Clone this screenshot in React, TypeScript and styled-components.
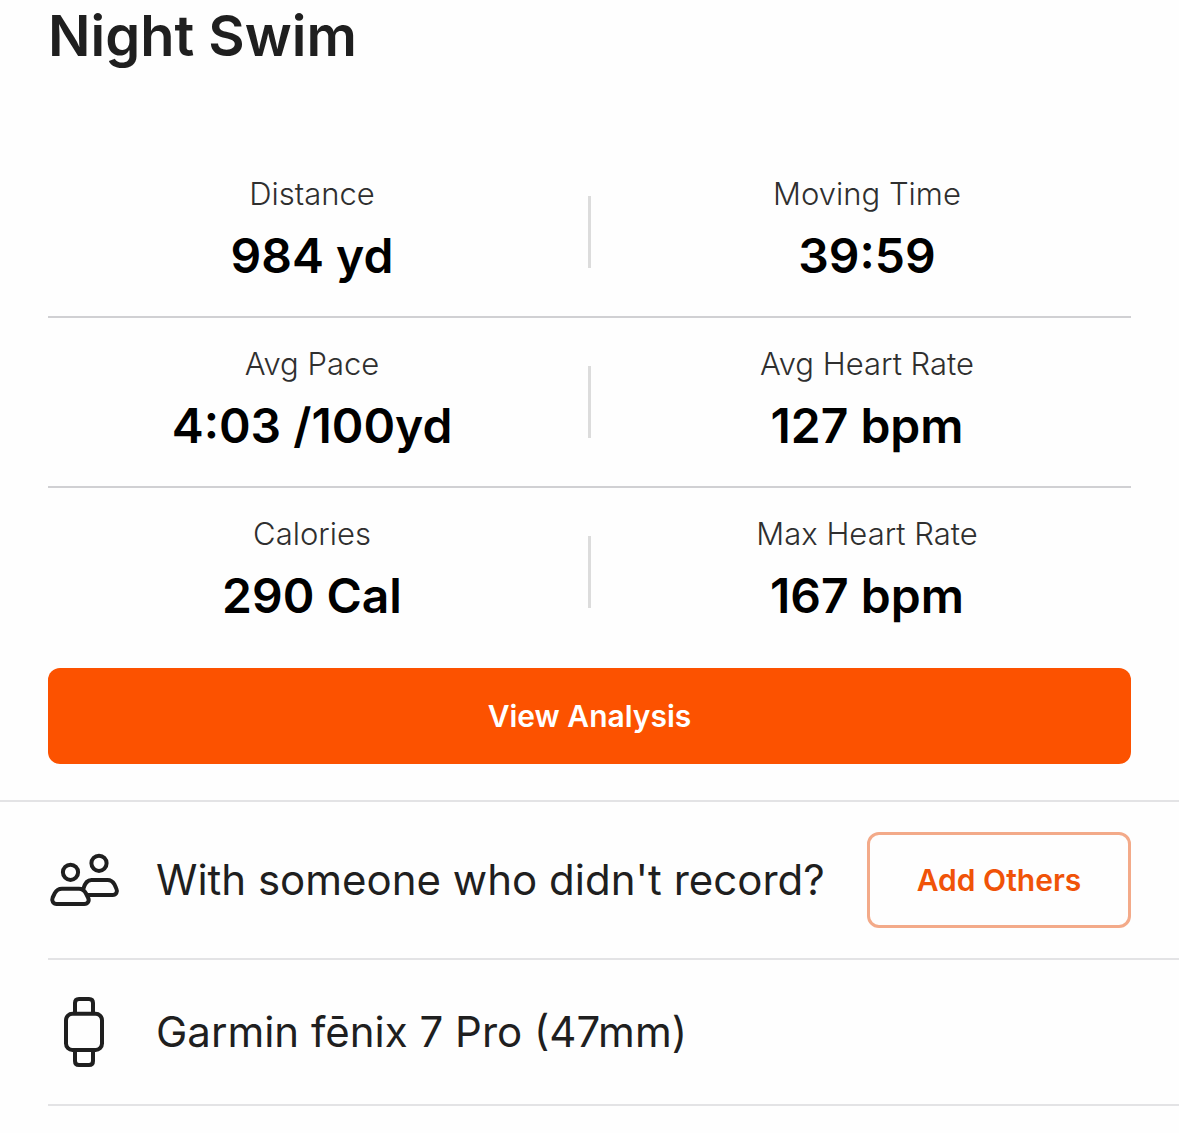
import React from "react";
import styled, { createGlobalStyle } from "styled-components";

const Global = createGlobalStyle`
  *, *::before, *::after { box-sizing: border-box; }
  body { margin: 0; background: #fefefe; color: #1f1f1f; font-family: Inter, "Liberation Sans", sans-serif; }
`;

const Page = styled.main`
  display: flex;
  flex-direction: column;
`;

const Title = styled.h1`
  margin: 0;
  padding: 0 48px;
  font-size: 56px;
  line-height: 72px;
  font-weight: 600;
`;

const Stats = styled.dl`
  margin: 74px 48px 0;
`;

const StatRow = styled.div`
  display: grid;
  grid-template-columns: 1fr 3px 1fr;
  column-gap: 12px;
  align-items: center;
  height: 170px;
  border-top: 2px solid transparent;
  & + & { border-top-color: #d0d0d3; }
`;

const Stat = styled.div`
  display: flex;
  flex-direction: column;
  align-items: center;
  gap: 8px;
`;

const Divider = styled.span`
  height: 72px;
  background: #dcdcdc;
`;

const Label = styled.dt`
  font-size: 31px;
  line-height: 40px;
  font-weight: 300;
  color: #2f2f2f;
`;

const Value = styled.dd`
  margin: 0;
  font-size: 48px;
  line-height: 68px;
  font-weight: 600;
  color: #000;
`;

const Button = styled.button`
  height: 96px;
  border: 0;
  border-radius: 12px;
  font: 600 30px/40px Inter, "Liberation Sans", sans-serif;
`;

const PrimaryButton = styled(Button)`
  margin: 12px 48px 36px;
  background: #fc5200;
  color: #fff;
`;

const OutlineButton = styled(Button)`
  flex: none;
  min-width: 264px;
  border: 3px solid #f3aa89;
  background: #fefefe;
  color: #f05308;
`;

const Details = styled.section`
  border-top: 2px solid #e3e3e5;
  padding-left: 48px;
`;

const DetailRow = styled.div<{ $height: number }>`
  display: flex;
  align-items: center;
  gap: 36px;
  height: ${(p) => p.$height}px;
  padding-right: 48px;
  border-bottom: 2px solid #e3e3e5;
`;

const Icon = styled.svg`
  flex: none;
  width: 72px;
  height: 72px;
  fill: none;
  stroke: #1f1f1f;
  stroke-width: 4;
  stroke-linejoin: round;
`;

const DetailText = styled.span`
  flex: 1;
  font-size: 42px;
  line-height: 56px;
  white-space: nowrap;
`;

const rows = [
  [["Distance", "984 yd"], ["Moving Time", "39:59"]],
  [["Avg Pace", "4:03 /100yd"], ["Avg Heart Rate", "127 bpm"]],
  [["Calories", "290 Cal"], ["Max Heart Rate", "167 bpm"]],
];

export default function App() {
  return (
    <>
      <Global />
      <Page>
        <Title>Night Swim</Title>
        <Stats>
          {rows.map(([left, right]) => (
            <StatRow key={left[0]}>
              <Stat><Label>{left[0]}</Label><Value>{left[1]}</Value></Stat>
              <Divider />
              <Stat><Label>{right[0]}</Label><Value>{right[1]}</Value></Stat>
            </StatRow>
          ))}
        </Stats>
        <PrimaryButton type="button">View Analysis</PrimaryButton>
        <Details>
          <DetailRow $height={158}>
            <Icon viewBox="0 0 72 72" aria-hidden="true">
              <circle cx="22.5" cy="28.3" r="7.6" />
              <circle cx="51" cy="19.3" r="7.6" />
              <path d="M14 44.7H31C34.5 44.7 36.3 46.3 38 49.5L40 53.5C41.8 57 39.8 60 36.3 60H8.7C5.2 60 3.3 57 4.7 53.5L6.8 49.2C8.3 46.2 10.5 44.7 14 44.7Z" />
              <path d="M35.3 45C37 38.5 39.5 36 43.5 36H59.5C63 36 64.8 37.5 66.5 40.5L68.3 44.5C70 48 68 51 64.7 51H39" />
            </Icon>
            <DetailText>With someone who didn't record?</DetailText>
            <OutlineButton type="button">Add Others</OutlineButton>
          </DetailRow>
          <DetailRow $height={146}>
            <Icon viewBox="0 0 72 72" aria-hidden="true">
              <rect x="18" y="17.7" width="36" height="36.3" rx="6.5" />
              <path d="M27 17.7V7Q27 3 31 3H41Q45 3 45 7V17.7M27 54V65Q27 69 31 69H41Q45 69 45 65V54" />
            </Icon>
            <DetailText>Garmin fēnix 7 Pro (47mm)</DetailText>
          </DetailRow>
        </Details>
      </Page>
    </>
  );
}
